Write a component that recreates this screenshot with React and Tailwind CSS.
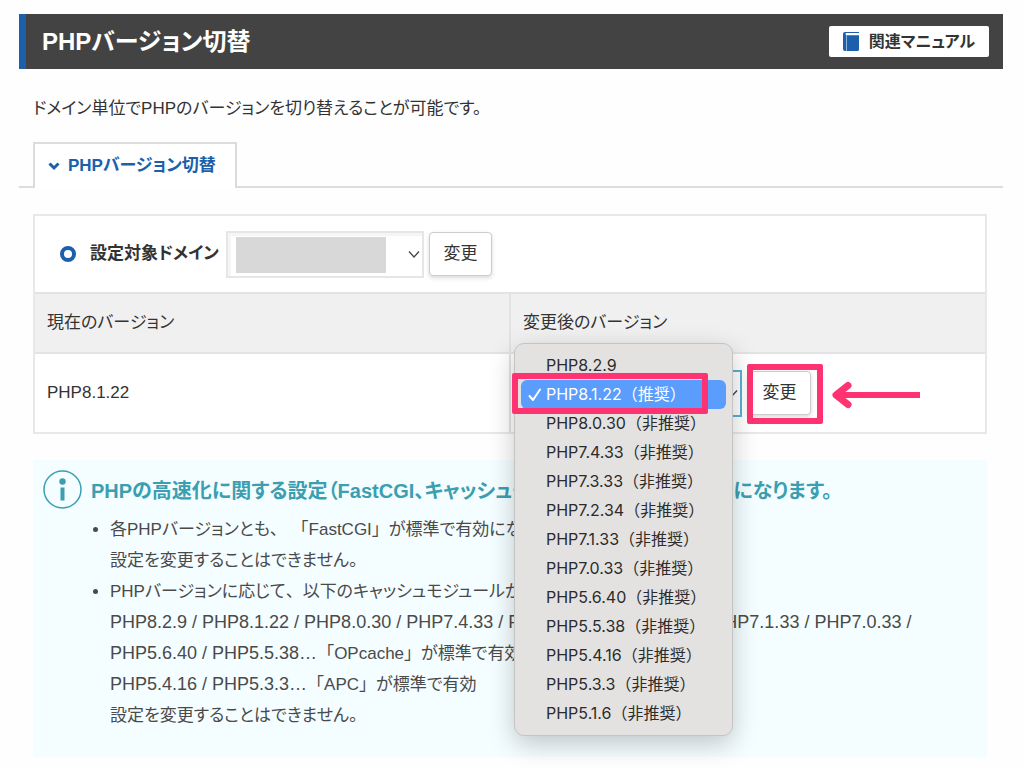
import React, { useState } from 'react';

const VERSIONS = [
  { value: '8.2.9', label: 'PHP8.2.9' },
  { value: '8.1.22', label: 'PHP8.1.22（推奨）' },
  { value: '8.0.30', label: 'PHP8.0.30（非推奨）' },
  { value: '7.4.33', label: 'PHP7.4.33（非推奨）' },
  { value: '7.3.33', label: 'PHP7.3.33（非推奨）' },
  { value: '7.2.34', label: 'PHP7.2.34（非推奨）' },
  { value: '7.1.33', label: 'PHP7.1.33（非推奨）' },
  { value: '7.0.33', label: 'PHP7.0.33（非推奨）' },
  { value: '5.6.40', label: 'PHP5.6.40（非推奨）' },
  { value: '5.5.38', label: 'PHP5.5.38（非推奨）' },
  { value: '5.4.16', label: 'PHP5.4.16（非推奨）' },
  { value: '5.3.3', label: 'PHP5.3.3（非推奨）' },
  { value: '5.1.6', label: 'PHP5.1.6（非推奨）' },
];

const Chevron = () => (
  <svg className="absolute right-1 top-1/2 -translate-y-1/2 w-3 h-3 pointer-events-none" viewBox="0 0 12 12" fill="none" stroke="#444" strokeWidth="1.3">
    <path d="M1 3.5 6 9l5-5.5" />
  </svg>
);

const ChangeButton = () => (
  <button
    type="button"
    className="w-[63px] h-11 shrink-0 bg-white border border-[#ccc] rounded text-[17px] text-[#333] shadow-[0_2px_4px_rgba(0,0,0,0.15)]"
  >
    変更
  </button>
);

// Quotation brackets and commas keep their full width
const Wide = ({ children }) => (
  <span className="[font-feature-settings:normal]">{children}</span>
);

// Open option list of the version drop-down
const VersionMenu = ({ selected, onSelect }) => (
  <ul
    role="listbox"
    aria-label="変更後のバージョン"
    className="absolute z-10 left-[3px] -top-[11px] w-[219px] py-[7px] px-1.5 rounded-[10px] bg-[#e4e2e1] border border-[#c4c4c4] shadow-[0_8px_26px_rgba(0,0,0,0.22)] font-['Inter','Noto_Sans_CJK_JP',sans-serif] [font-feature-settings:normal] text-base text-[#2b2b2b]"
  >
    {VERSIONS.map((v) => (
      <li
        key={v.value}
        role="option"
        aria-selected={v.value === selected}
        onClick={() => onSelect(v.value)}
        className={
          v.value === selected
            ? 'relative h-[29px] leading-[29px] pl-[25px] rounded-md whitespace-nowrap bg-[#5a9dfc] text-white'
            : 'relative h-[29px] leading-[29px] pl-[25px] rounded-md whitespace-nowrap'
        }
      >
        {v.value === selected && (
          <svg className="absolute left-[7px] top-2 w-3.5 h-3.5" viewBox="0 0 14 14" fill="none" stroke="currentColor" strokeWidth="2" strokeLinecap="round" strokeLinejoin="round">
            <path d="M1.5 8 5 12 12 1.5" />
          </svg>
        )}
        {v.label}
      </li>
    ))}
  </ul>
);

const App = () => {
  const [version, setVersion] = useState('8.1.22');

  return (
    <div className="min-h-screen bg-[#fefefe] pt-3.5 pl-[19px] pr-[21px] pb-3 font-['Liberation_Sans','Noto_Sans_CJK_JP',sans-serif] [font-feature-settings:'palt'] text-[17px] text-[#333]">

      {/* Page title */}
      <header className="flex items-center justify-between h-[55px] bg-[#434343] border-l-[7px] border-[#1c5fab] pl-4 pr-3.5">
        <h1 className="text-2xl font-bold text-white">PHPバージョン切替</h1>
        <a href="#manual" className="flex items-center h-[31px] px-3.5 gap-2.5 bg-white rounded-xs text-base font-bold text-[#333]">
          <svg className="w-4 h-[19px]" viewBox="0 0 16 19">
            <path d="M2 0H16V1H3.500Q2.500 1 2.500 2T3.500 3.200H16V17.500Q16 19 14.500 19H2Q0 19 0 17V2Q0 0 2 0Z" fill="#1c5fab" />
            <path d="M3.500 3V19" stroke="#8fb3da" strokeWidth="1" />
          </svg>
          関連マニュアル
        </a>
      </header>

      <p className="mt-6 ml-3.5 leading-8">ドメイン単位でPHPのバージョンを切り替えることが可能です。</p>

      {/* Tabs */}
      <div className="flex mt-[17px]">
        <div className="w-3.5 border-b-2 border-[#dcdcdc]"></div>
        <button type="button" className="flex items-center h-[46px] pl-[13px] pr-[19px] gap-2 border-2 border-b-0 border-[#dcdcdc] bg-white font-bold text-[#1c5fab]">
          <svg className="w-3 h-3" viewBox="0 0 12 12" fill="none" stroke="currentColor" strokeWidth="3">
            <path d="M1.500 3.500 6 8l4.500-4.500" />
          </svg>
          PHPバージョン切替
        </button>
        <div className="grow border-b-2 border-[#dcdcdc]"></div>
      </div>

      <main className="ml-3.5 mr-4">
        <section className="mt-[26px] border-2 border-[#e8e8e8] bg-white">
          {/* Target domain */}
          <div className="flex items-center h-[76px] pl-[25px]">
            <span className="w-4 h-4 rounded-full border-4 border-[#1c5fab]"></span>
            <label htmlFor="domain" className="ml-3.5 mr-[7px] font-bold">設定対象ドメイン</label>
            <div className="relative">
              <select id="domain" className="appearance-none block w-[198px] h-[47px] border-2 border-[#e6e6e6] bg-white shadow-[inset_3px_3px_0_#f5f5f5]"></select>
              <span className="absolute left-2.5 top-1.5 w-[150px] h-9 bg-[#d8d8d8]"></span>
              <Chevron />
            </div>
            <div className="ml-[5px]">
              <ChangeButton />
            </div>
          </div>

          <table className="w-full table-fixed border-collapse">
            <thead>
              <tr className="h-[60px] bg-[#f0f0f0] border-y-2 border-[#e3e3e3] text-left">
                <th className="pl-3 font-normal">現在のバージョン</th>
                <th className="pl-3 font-normal border-l-2 border-[#e3e3e3]">
                  <label htmlFor="version">変更後のバージョン</label>
                </th>
              </tr>
            </thead>
            <tbody>
              <tr className="h-[78px]">
                <td className="pl-3">PHP8.1.22</td>
                <td className="p-0 border-l-2 border-[#e3e3e3]">
                  <div className="relative flex items-center h-[78px] pl-[13px]">
                    <div className="relative">
                      <select
                        id="version"
                        value={version}
                        onChange={(e) => setVersion(e.target.value)}
                        className="appearance-none block w-[218px] h-[47px] pl-3 border-2 border-[#55b1d8] bg-white"
                      >
                        {VERSIONS.map((v) => (
                          <option key={v.value} value={v.value}>{v.label}</option>
                        ))}
                      </select>
                      <Chevron />
                    </div>
                    <div className="relative ml-1.5">
                      <ChangeButton />
                      <span className="absolute -left-px -top-[7px] w-[76px] h-[60px] border-[6px] border-[#ff3372] rounded-xs pointer-events-none"></span>
                      <svg className="absolute left-[84px] top-2.5 w-[88px] h-7" viewBox="0 0 88 28" fill="none" stroke="#ff3372" strokeWidth="6">
                        <path d="M5 14H88" />
                        <path d="M16 4.500 4 14l12 9.500" strokeWidth="7" strokeLinecap="round" strokeLinejoin="round" />
                      </svg>
                    </div>
                    <VersionMenu selected={version} onSelect={setVersion} />
                    <span className="absolute z-20 left-px top-[19px] w-[196px] h-[41px] border-[6px] border-[#ff3372] rounded-xs pointer-events-none"></span>
                  </div>
                </td>
              </tr>
            </tbody>
          </table>
        </section>

        {/* Notice */}
        <section className="flex mt-[26px] pl-2.5 pt-2.5 pb-[26px] gap-[9px] bg-[#f4fdff]">
          <svg className="w-[39px] h-[39px] shrink-0" viewBox="0 0 39 39">
            <circle cx="19.500" cy="19.500" r="18.500" fill="none" stroke="#3b9fb1" strokeWidth="1.500" />
            <circle cx="19.500" cy="11.500" r="3.200" fill="#3b9fb1" />
            <rect x="17.500" y="17.500" width="4" height="13" fill="#3b9fb1" />
          </svg>
          <div>
            <h2 className="pt-[5px] text-xl leading-8 font-bold text-[#3b9fb1]">
              PHPの高速化に関する設定（FastCGI、キャッシュモジュール）が標準で有効になります。
            </h2>
            <ul className="mt-[7px] pl-[19px] list-disc leading-[31px] text-[#4a4a4a]">
              <li>
                各PHPバージョンとも<Wide>、 「</Wide>FastCGI<Wide>」</Wide>が標準で有効になります。<br />
                設定を変更することはできません。
              </li>
              <li>
                PHPバージョンに応じて<Wide>、</Wide>以下のキャッシュモジュールが有効です。<br />
                <span className="text-lg leading-[31px]">PHP8.2.9 / PHP8.1.22 / PHP8.0.30 / PHP7.4.33 / PHP7.3.33 / PHP7.2.34 / PHP7.1.33 / PHP7.0.33 /</span><br />
                <span className="text-lg leading-[31px]">PHP5.6.40 / PHP5.5.38…</span><Wide>「</Wide>OPcache<Wide>」</Wide>が標準で有効<br />
                <span className="text-lg leading-[31px]">PHP5.4.16 / PHP5.3.3…</span><Wide>「</Wide>APC<Wide>」</Wide>が標準で有効<br />
                設定を変更することはできません。
              </li>
            </ul>
          </div>
        </section>
      </main>
    </div>
  );
};

export default App;
